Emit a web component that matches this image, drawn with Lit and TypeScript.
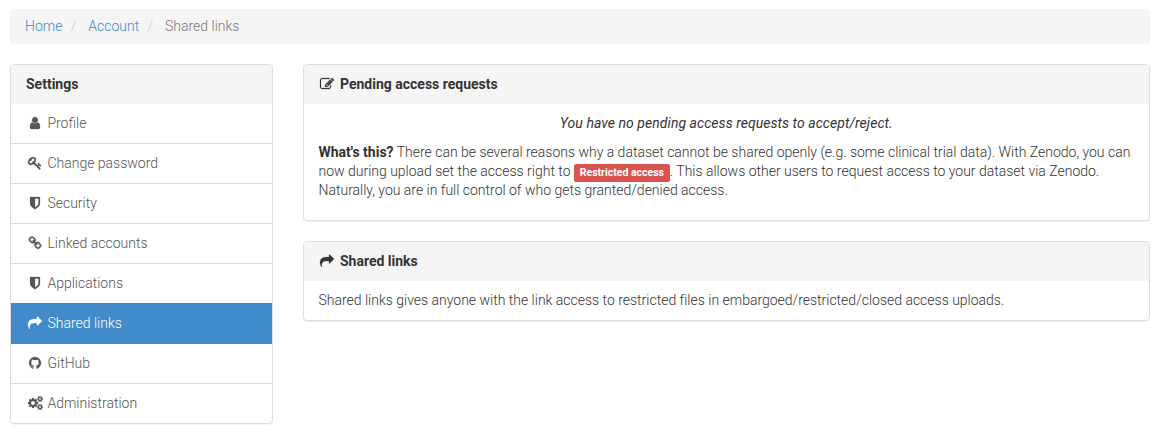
import { LitElement, html, css } from "lit";
import { customElement, property } from "lit/decorators.js";
import { classMap } from "lit/directives/class-map.js";

const SMALL_COG =
  "v140q0 16-149 31-12 27-30 52 51 113 51 138 0 4-4 7-122 71-124 71-8 0-46-47t-52-68q-20 2-30 2t-30-2q-14 21-52 68t-46 47q-2 0-124-71-4-3-4-7 0-25 51-138-18-25-30-52-149-15-149-31v-140q0-16 149-31 13-29 30-52-51-113-51-138 0-4 4-7 4-2 35-20t59-34 30-16q8 0 46 46.5t52 67.5q20-2 30-2t30 2q51-71 92-112l6-2q4 0 124 70 4 3 4 7 0 25-51 138 17 23 30 52 149 15 149 31z";

const ICONS: Record<string, { width: number; path: string }> = {
  user: {
    width: 1792,
    path: "M1536 1399q0 109-62.5 187t-150.5 78h-854q-88 0-150.5-78t-62.5-187q0-85 8.5-160.5t31.5-152 58.5-131 94-89 134.5-34.5q131 128 313 128t313-128q76 0 134.5 34.5t94 89 58.5 131 31.5 152 8.5 160.5zm-256-887q0 159-112.5 271.5t-271.5 112.5-271.5-112.5-112.5-271.5 112.5-271.5 271.5-112.5 271.5 112.5 112.5 271.5z",
  },
  key: {
    width: 1792,
    path: "M832 512q0-80-56-136t-136-56-136 56-56 136q0 42 19 83-41-19-83-19-80 0-136 56t-56 136 56 136 136 56 136-56 56-136q0-42-19-83 41 19 83 19 80 0 136-56t56-136zm851 704q0 17-49 66t-66 49q-9 0-28.5-16t-36.5-33-38.5-40-24.5-26l-96 96 220 220q28 28 28 68 0 42-39 81t-81 39q-40 0-68-28l-671-671q-176 131-365 131-163 0-265.5-102.5t-102.5-265.5q0-160 95-313t248-248 313-95q163 0 265.5 102.5t102.5 265.5q0 189-131 365l355 355 96-96q-3-3-26-24.5t-40-38.5-33-36.5-16-28.5q0-17 49-66t66-49q13 0 23 10 6 6 46 44.5t82 79.5 86.5 86 73 78 28.5 41z",
  },
  shield: {
    width: 1792,
    path: "M1344 960v-640h-448v1137q119-63 213-137 235-184 235-360zm192-768v768q0 86-33.5 170.5t-83 150-118 127.5-126.5 103-121 77.5-89.5 49.5-42.5 20q-12 6-26 6t-26-6q-16-7-42.5-20t-89.5-49.5-121-77.5-126.5-103-118-127.5-83-150-33.5-170.5v-768q0-26 19-45t45-19h1152q26 0 45 19t19 45z",
  },
  link: {
    width: 1792,
    path: "M1520 1216q0-40-28-68l-208-208q-28-28-68-28-42 0-72 32 3 3 19 18.5t21.5 21.5 15 19 13 25.5 3.5 27.5q0 40-28 68t-68 28q-15 0-27.5-3.5t-25.5-13-19-15-21.5-21.5-18.5-19q-33 31-33 73 0 40 28 68l206 207q27 27 68 27 40 0 68-26l147-146q28-28 28-67zm-703-705q0-40-28-68l-206-207q-28-28-68-28-39 0-68 27l-147 146q-28 28-28 67 0 40 28 68l208 208q27 27 68 27 42 0 72-31-3-3-19-18.5t-21.5-21.5-15-19-13-25.5-3.5-27.5q0-40 28-68t68-28q15 0 27.5 3.5t25.5 13 19 15 21.5 21.5 18.5 19q33-31 33-73zm895 705q0 120-85 203l-147 146q-83 83-203 83-121 0-204-85l-206-207q-83-83-83-203 0-123 88-209l-88-88q-86 88-208 88-120 0-204-84l-208-208q-84-84-84-204t85-203l147-146q83-83 203-83 121 0 204 85l206 207q83 83 83 203 0 123-88 209l88 88q86-88 208-88 120 0 204 84l208 208q84 84 84 204z",
  },
  share: {
    width: 1792,
    path: "M1792 640q0 26-19 45l-512 512q-19 19-45 19t-45-19-19-45v-256h-224q-98 0-175.5 6t-154 21.5-133 42.5-105.5 69.5-80 101-48.5 138.5-17.5 181q0 55 5 123 0 6 2.5 23.5t2.5 26.5q0 15-8.5 25t-23.5 10q-16 0-28-17-7-9-13-22t-13.5-30-10.5-24q-127-285-127-451 0-199 53-333 162-403 875-403h224v-256q0-26 19-45t45-19 45 19l512 512q19 19 19 45z",
  },
  github: {
    width: 1792,
    path: "M896 128q209 0 385.5 103t279.5 279.5 103 385.5q0 251-146.5 451.5t-378.5 277.5q-27 5-40-7t-13-30q0-3 .5-76.5t.5-134.5q0-97-52-142 57-6 102.5-18t94-39 81-66.5 53-105 20.5-150.5q0-119-79-206 37-91-8-204-28-9-81 11t-92 44l-38 24q-93-26-192-26t-192 26q-16-11-42.5-27t-83.5-38.5-85-13.5q-45 113-8 204-79 87-79 206 0 85 20.5 150t52.5 105 80.5 67 94 39 102.5 18q-39 36-49 103-21 10-45 15t-57 5-65.5-21.5-55.5-62.5q-19-32-48.5-52t-49.5-24l-20-3q-21 0-29 4.5t-5 11.5 9 14 13 12l7 5q22 10 43.5 38t31.5 51l10 23q13 38 44 61.5t67 30 69.5 7 55.5-3.5l23-4q0 38 .5 88.5t.5 54.5q0 18-13 30t-40 7q-232-77-378.5-277.5t-146.5-451.5q0-209 103-385.5t279.5-279.5 385.5-103z",
  },
  cogs: {
    width: 1920,
    path:
      "M896 896q0-106-75-181t-181-75-181 75-75 181 75 181 181 75 181-75 75-181zm768 512q0-52-38-90t-90-38-90 38-38 90q0 53 37.5 90.5t90.5 37.5 90.5-37.5 37.5-90.5zm0-1024q0-52-38-90t-90-38-90 38-38 90q0 53 37.5 90.5t90.5 37.5 90.5-37.5 37.5-90.5zm-384 421v185q0 10-7 19.5t-16 10.5l-155 24q-11 35-32 76 34 48 90 115 7 11 7 20 0 12-7 19-23 30-82.5 89.5t-78.5 59.5q-11 0-21-7l-115-90q-37 19-77 31-11 108-23 155-7 24-30 24h-186q-11 0-20-7.5t-10-17.5l-23-153q-34-10-75-31l-118 89q-7 7-20 7-11 0-21-8-144-133-144-160 0-9 7-19 10-14 41-53t47-61q-23-44-35-82l-152-24q-10-1-17-9.5t-7-19.5v-185q0-10 7-19.5t16-10.5l155-24q11-35 32-76-34-48-90-115-7-11-7-20 0-12 7-20 22-30 82-89t79-59q11 0 21 7l115 90q34-18 77-32 11-108 23-154 7-24 30-24h186q11 0 20 7.5t10 17.5l23 153q34 10 75 31l118-89q8-7 20-7 11 0 21 8 144 133 144 160 0 8-7 19-12 16-42 54t-45 60q23 48 34 82l152 23q10 2 17 10.5t7 19.5z" +
      "M1920 1338" + SMALL_COG + "M1920 314" + SMALL_COG,
  },
  edit: {
    width: 1792,
    path: "M888 1184l116-116-152-152-116 116v56h96v96h56zm440-720q-16-16-33 1l-350 350q-17 17-1 33t33-1l350-350q17-17 1-33zm80 594v190q0 119-84.5 203.5t-203.5 84.5h-832q-119 0-203.5-84.5t-84.5-203.5v-832q0-119 84.5-203.5t203.5-84.5h832q63 0 117 25 15 7 18 23 3 17-9 29l-49 49q-14 14-32 8-23-6-45-6h-832q-66 0-113 47t-47 113v832q0 66 47 113t113 47h832q66 0 113-47t47-113v-126q0-13 9-22l64-64q15-15 35-7t20 29zm-96-738l288 288-672 672h-288v-288zm444 132l-92 92-288-288 92-92q28-28 68-28t68 28l152 152q28 28 28 68t-28 68z",
  },
};

@customElement("fw-icon")
export class FwIcon extends LitElement {
  @property() name = "user";

  static styles = css`
    :host {
      display: inline-block;
      width: 18px;
      height: 14px;
      line-height: 14px;
      text-align: center;
      vertical-align: -2px;
    }
    .glyph {
      display: block;
      height: 14px;
      margin: 0 auto;
      overflow: visible;
      fill: currentColor;
      stroke: currentColor;
      stroke-width: 28;
    }
  `;

  render() {
    const { width, path } = ICONS[this.name];
    return html`<svg class="glyph" width=${width / 128} height="14" viewBox="0 0 ${width} 1792" aria-hidden="true"><path d=${path}></path></svg>`;
  }
}

@customElement("content-panel")
export class ContentPanel extends LitElement {
  @property() heading = "";
  @property() icon = "";
  @property({ type: Boolean }) flush = false;

  static styles = css`
    :host {
      display: block;
    }
    .panel {
      border: 1px solid #ddd;
      border-radius: 4px;
      background: #fff;
      box-shadow: 0 1px 1px rgba(0, 0, 0, 0.05);
    }
    .heading {
      padding: 10px 15px;
      background: #f5f5f5;
      border-radius: 3px 3px 0 0;
      font-weight: 700;
    }
    .icon {
      margin: 0 0.2px 0 -0.2px;
    }
    .body {
      padding: 10px 15px;
    }
    .body.flush {
      padding: 0;
    }
  `;

  render() {
    return html`
      <section class="panel">
        <div class="heading">${this.icon ? html`<fw-icon class="icon" name=${this.icon}></fw-icon> ` : ""}${this.heading}</div>
        <div class=${classMap({ body: true, flush: this.flush })}><slot></slot></div>
      </section>
    `;
  }
}

const MENU = [
  { icon: "user", label: "Profile" },
  { icon: "key", label: "Change password" },
  { icon: "shield", label: "Security" },
  { icon: "link", label: "Linked accounts" },
  { icon: "shield", label: "Applications" },
  { icon: "share", label: "Shared links", active: true },
  { icon: "github", label: "GitHub" },
  { icon: "cogs", label: "Administration" },
];

@customElement("app-root")
export class AppRoot extends LitElement {
  static styles = css`
    :host {
      display: block;
      box-sizing: border-box;
      width: 1160px;
      min-height: 446px;
      padding: 9px 10px 0;
      background: #fff;
      color: #333;
      font: 300 14px/19px Roboto, sans-serif;
    }
    a {
      color: #428bca;
      text-decoration: none;
    }
    .breadcrumb {
      margin: 0 0 20px;
      padding: 8px 15px;
      background: #f5f5f5;
      border-radius: 4px;
      list-style: none;
    }
    .crumb {
      display: inline-block;
    }
    .crumb + .crumb::before {
      content: "/\\00a0";
      padding: 0 5px;
      color: #ccc;
    }
    .current {
      color: #777;
    }
    .columns {
      display: grid;
      grid-template-columns: 262.5px 847.5px;
      column-gap: 30px;
      align-items: start;
    }
    .content {
      display: grid;
      row-gap: 20px;
    }
    .menu {
      display: flex;
      flex-direction: column;
    }
    .item {
      padding: 10px 15px;
      color: #555;
      border-bottom: 1px solid #ddd;
    }
    .item:last-child {
      border-bottom: 0;
    }
    .item.active {
      margin-top: -1px;
      padding-top: 11px;
      background: #428bca;
      border-color: #428bca;
      color: #fff;
    }
    .empty {
      margin: 0 0 10px;
      text-align: center;
      font-style: italic;
      font-weight: 400;
      letter-spacing: 0.05px;
    }
    .text {
      margin: 0;
      letter-spacing: -0.005px;
    }
    .text.spaced {
      margin-bottom: 10px;
    }
    .strong {
      font-weight: 700;
    }
    .label {
      display: inline;
      padding: 0.2em 0.56em 0.3em;
      background: #d9534f;
      border-radius: 0.25em;
      color: #fff;
      font-size: 10.5px;
      font-weight: 700;
      line-height: 1;
      white-space: nowrap;
      vertical-align: baseline;
    }
  `;

  render() {
    return html`
      <ol class="breadcrumb">
        <li class="crumb"><a href="#">Home</a></li>
        <li class="crumb"> <a href="#">Account</a></li>
        <li class="crumb current"> Shared links</li>
      </ol>
      <div class="columns">
        <content-panel heading="Settings" flush>
          <nav class="menu">
            ${MENU.map(
              (m) => html`<a href="#" class=${classMap({ item: true, active: !!m.active })}><fw-icon name=${m.icon}></fw-icon> ${m.label}</a>`
            )}
          </nav>
        </content-panel>
        <main class="content">
          <content-panel heading="Pending access requests" icon="edit">
            <p class="empty">You have no pending access requests to accept/reject.</p>
            <p class="text spaced"><strong class="strong">What's this?</strong> There can be several reasons why a dataset cannot be shared openly (e.g. some clinical trial data). With Zenodo, you can now during upload set the access right to <span class="label">Restricted access</span>. This allows other users to request access to your dataset via Zenodo. Naturally, you are in full control of who gets granted/denied access.</p>
          </content-panel>
          <content-panel heading="Shared links" icon="share">
            <p class="text">Shared links gives anyone with the link access to restricted files in embargoed/restricted/closed access uploads.</p>
          </content-panel>
        </main>
      </div>
    `;
  }
}
